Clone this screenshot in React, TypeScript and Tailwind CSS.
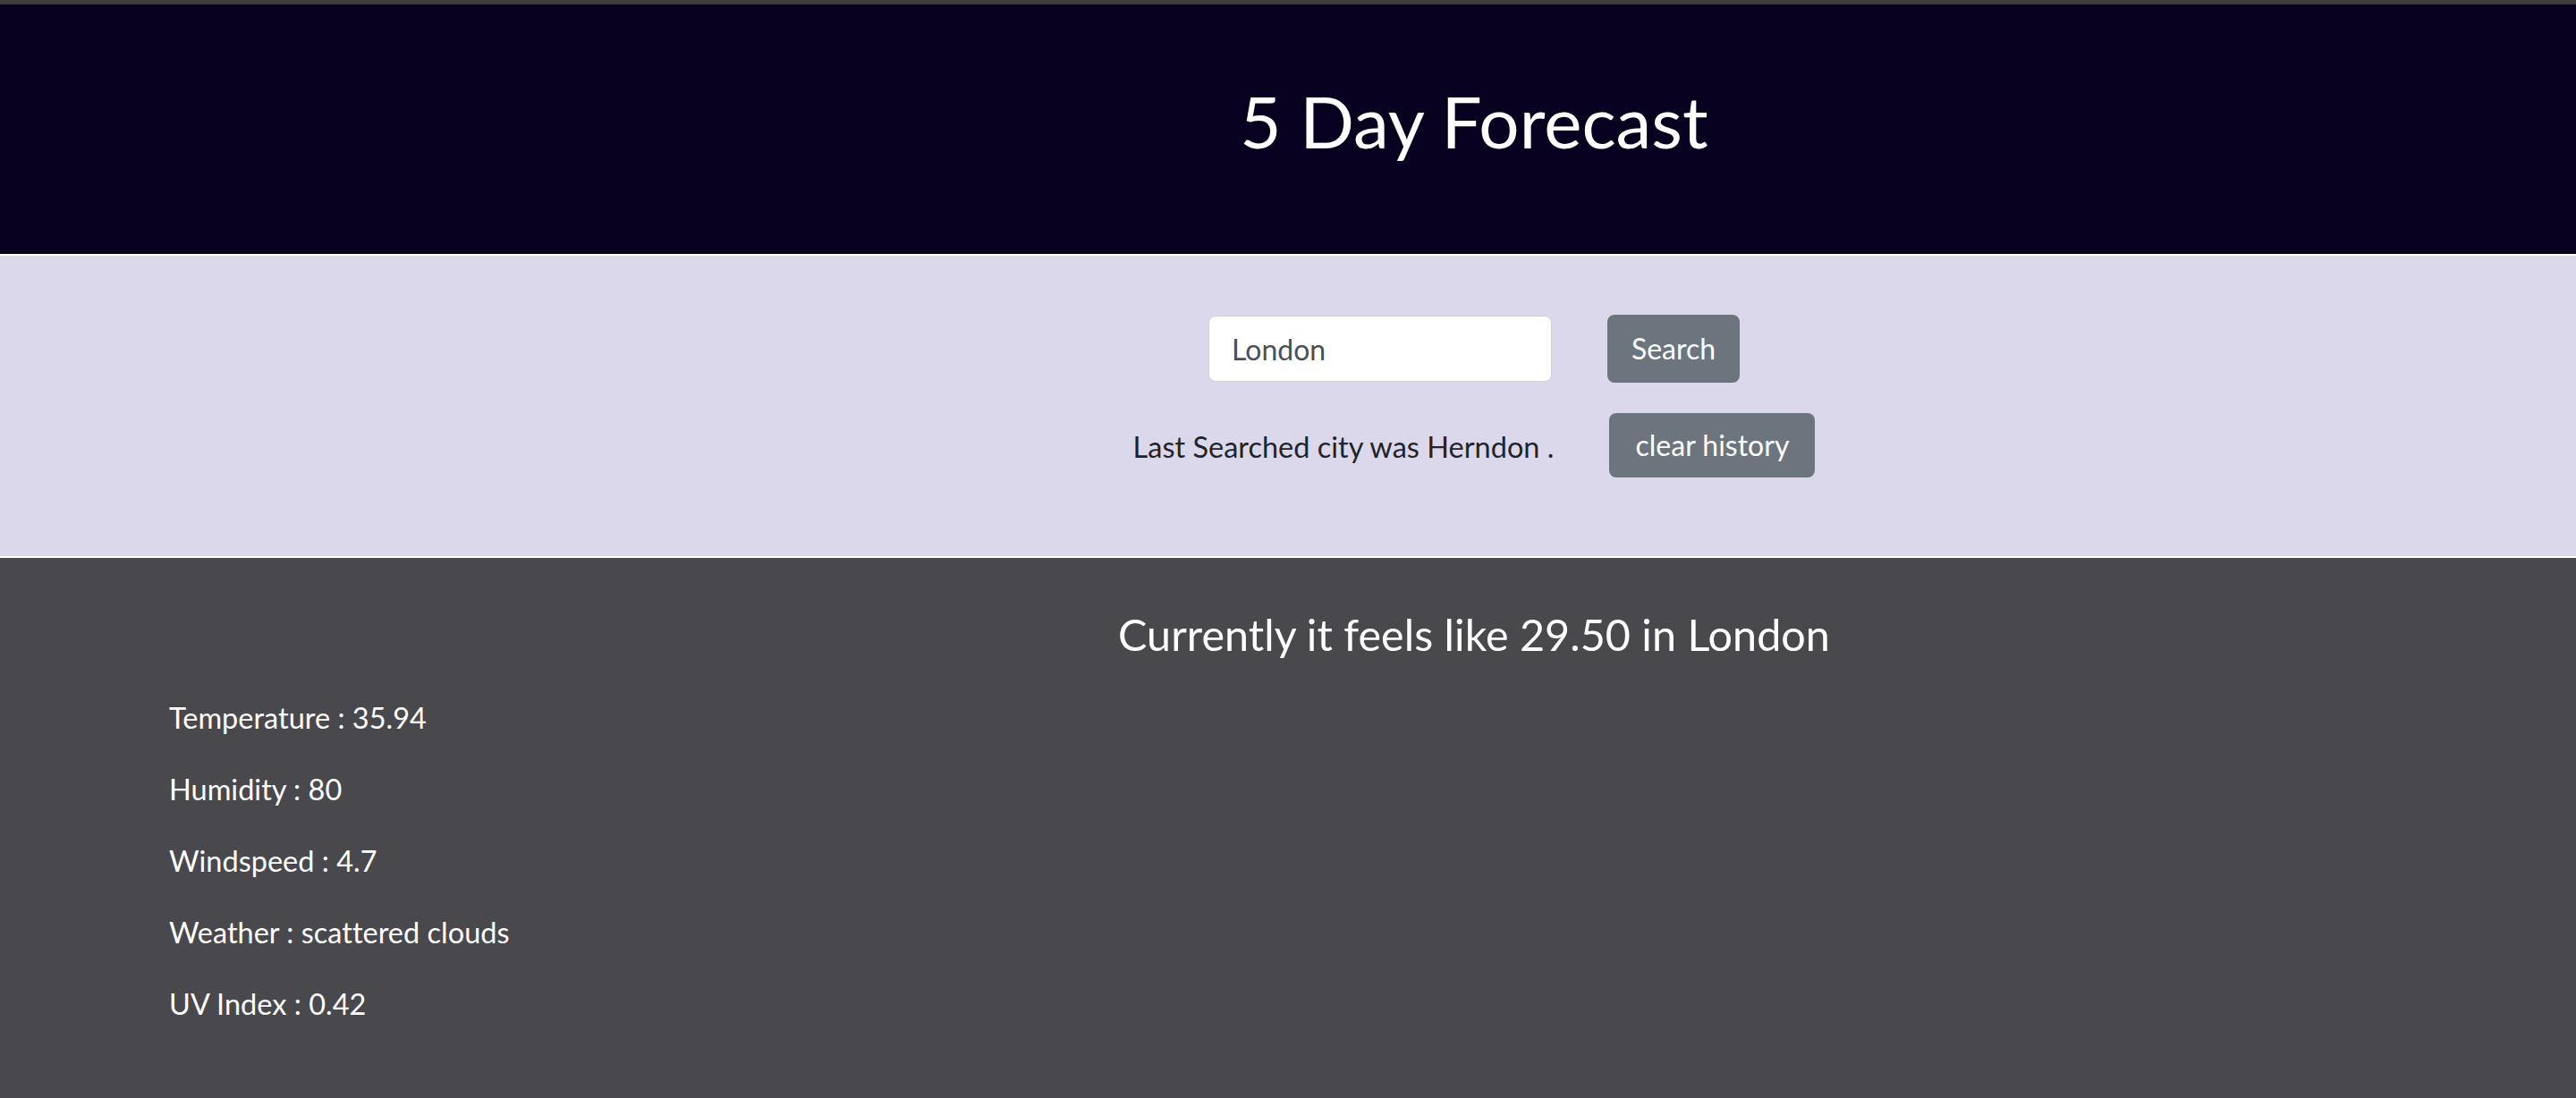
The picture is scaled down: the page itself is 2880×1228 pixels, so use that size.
import React from "react";

export default function App() {
  return (
    <div className="min-h-screen flex flex-col bg-[#49484d] font-['Lato',sans-serif] [font-variant-ligatures:none]">
      <div className="h-[5px] bg-[#3d3d3d]" />
      <header className="bg-[#07001f] border-b-2 border-white pt-[82px] pb-[101px] pl-[416px] flex justify-center">
        <h1 className="text-[80px] leading-[96px] text-white font-normal m-0">5 Day Forecast</h1>
      </header>
      <section className="bg-[#dcd8ec] border-b-2 border-white pt-[66px] pb-[88px] pl-[416px] flex flex-col items-center gap-[34px]">
        <div className="flex items-center gap-[62px]">
          <input
            readOnly
            value="London"
            className="w-[384px] h-[74px] bg-white border border-[#ced4da] rounded-[8px] px-[25px] text-[32px] leading-[48px] text-[#495057] outline-none font-['Lato',sans-serif]"
          />
          <button className="w-[148px] h-[76px] bg-[#6c757d] border-2 border-[#6c757d] rounded-[8px] text-white text-[32px] leading-[48px] font-['Lato',sans-serif]">
            Search
          </button>
        </div>
        <div className="flex items-center gap-[62px]">
          <p className="text-[32.5px] leading-[48px] text-[#212529] m-0 mt-[3px]">Last Searched city was Herndon .</p>
          <button className="w-[230px] h-[72px] bg-[#6c757d] rounded-[8px] text-white text-[32px] leading-[48px] font-['Lato',sans-serif]">
            clear history
          </button>
        </div>
      </section>
      <main className="flex-1 bg-[#49484d] pt-[56px] text-white">
        <div className="pl-[416px] flex justify-center">
          <h4 className="text-[48.5px] leading-[58px] font-normal m-0">Currently it feels like 29.50 in London</h4>
        </div>
        <div className="ml-[189px] mt-[41px] flex flex-col gap-[32px] text-[32.5px] leading-[48px]">
          <p>Temperature : 35.94</p>
          <p>Humidity : 80</p>
          <p>Windspeed : 4.7</p>
          <p>Weather : scattered clouds</p>
          <p>UV Index : 0.42</p>
        </div>
      </main>
    </div>
  );
}
